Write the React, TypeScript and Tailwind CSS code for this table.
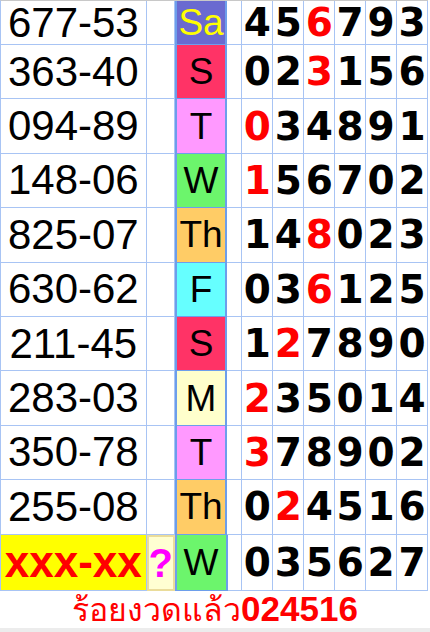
import React from 'react';

type Row = {
  pair: string;
  day: string;
  bg: string;
  fg: string;
  digits: string;
  red: number;
};

const rows: Row[] = [
  { pair: '677-53', day: 'Sa', bg: 'bg-[#6a6ad0]', fg: 'text-[#ffff00]', digits: '456793', red: 2 },
  { pair: '363-40', day: 'S', bg: 'bg-[#ff3366]', fg: 'text-black', digits: '023156', red: 2 },
  { pair: '094-89', day: 'T', bg: 'bg-[#ff99ff]', fg: 'text-black', digits: '034891', red: 0 },
  { pair: '148-06', day: 'W', bg: 'bg-[#6cf56c]', fg: 'text-black', digits: '156702', red: 0 },
  { pair: '825-07', day: 'Th', bg: 'bg-[#ffcc66]', fg: 'text-black', digits: '148023', red: 2 },
  { pair: '630-62', day: 'F', bg: 'bg-[#66ffff]', fg: 'text-black', digits: '036125', red: 2 },
  { pair: '211-45', day: 'S', bg: 'bg-[#ff3366]', fg: 'text-black', digits: '127890', red: 1 },
  { pair: '283-03', day: 'M', bg: 'bg-[#ffffcc]', fg: 'text-black', digits: '235014', red: 0 },
  { pair: '350-78', day: 'T', bg: 'bg-[#ff99ff]', fg: 'text-black', digits: '378902', red: 0 },
  { pair: '255-08', day: 'Th', bg: 'bg-[#ffcc66]', fg: 'text-black', digits: '024516', red: 1 },
];

const line = 'border-r border-b border-[#a8c4f4]';

function Digits({ value, red }: { value: string; red: number }) {
  return (
    <>
      {value.split('').map((d, i) => (
        <div
          key={i}
          className={`${line} w-[31px] flex items-center justify-center font-['DejaVu_Sans',sans-serif] font-bold text-[39px] leading-none ${
            i === red ? 'text-[#ff0000]' : 'text-black'
          }`}
        >
          {d}
        </div>
      ))}
    </>
  );
}

export default function App() {
  return (
    <div className="w-[430px] h-[632px] bg-white flex flex-col overflow-hidden">
      <div className="flex flex-col border-t border-[#c8c8c8] border-l border-l-[#a8c4f4] w-[428px]">
        {rows.map((r, idx) => (
          <div key={idx} className={`flex ${idx === 0 ? 'h-[44px]' : 'h-[54.4px]'}`}>
            <div className={`${line} w-[146px] flex items-center justify-center font-['Liberation_Sans',sans-serif] text-[42px] leading-none text-black`}>
              {r.pair}
            </div>
            <div className={`${line} w-[28px]`} />
            <div
              className={`w-[53px] border-x-2 border-b border-[#6d9eeb] ${r.bg} ${r.fg} flex items-center justify-center font-['Liberation_Sans',sans-serif] text-[37px] leading-none`}
            >
              {r.day}
            </div>
            <div className={`${line} w-[15px]`} />
            <Digits value={r.digits} red={r.red} />
          </div>
        ))}
        <div className="flex h-[56px]">
          <div className={`${line} w-[146px] bg-[#ffff00] flex items-center justify-center font-['Liberation_Sans',sans-serif] font-bold text-[44px] leading-none text-[#ff0000] overflow-hidden`}>
            xxx-xx
          </div>
          <div className="w-[28px] bg-[#ffffd2] border-2 border-[#eadc9a] flex items-center justify-center font-['Liberation_Sans',sans-serif] font-bold text-[40px] leading-none text-[#ff00ff]">
            ?
          </div>
          <div className="w-[53px] border-x-2 border-b border-[#6d9eeb] bg-[#6cf56c] text-black flex items-center justify-center font-['Liberation_Sans',sans-serif] text-[37px] leading-none">
            W
          </div>
          <div className={`${line} w-[15px]`} />
          <Digits value="035627" red={-1} />
        </div>
      </div>
      <div className="flex-1 flex items-end justify-center pb-[2px] text-[#ff0000] leading-none">
        <span className="font-['Tahoma','DejaVu_Sans',sans-serif] text-[32px]">ร้อยงวดแล้ว</span>
        <span className="font-['Liberation_Sans',sans-serif] font-bold text-[35px]">024516</span>
      </div>
      <div className="h-[4px] bg-[#ececec]" />
    </div>
  );
}
